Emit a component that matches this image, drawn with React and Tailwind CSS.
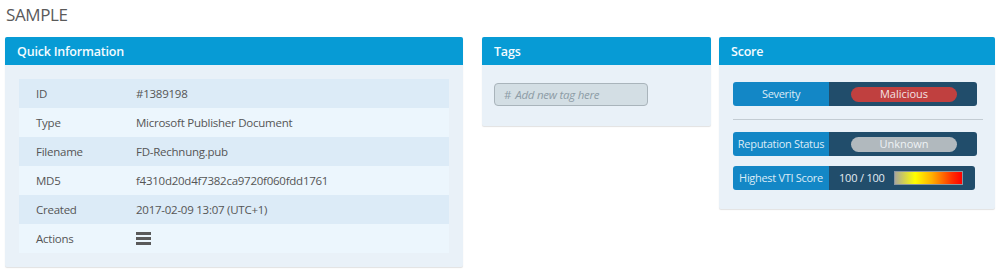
import React from 'react';

const font = { fontFamily: '"Open Sans", "Noto Sans", sans-serif' };

const info = [
  ['ID', '#1389198'],
  ['Type', 'Microsoft Publisher Document'],
  ['Filename', 'FD-Rechnung.pub'],
  ['MD5', 'f4310d20d4f7382ca9720f060fdd1761'],
  ['Created', '2017-02-09 13:07 (UTC+1)'],
  ['Actions', null],
];

const Panel = ({ title, className, children }) => (
  <div className={`bg-[#e9f1f8] rounded-[2px] shadow-[0_1px_1px_rgba(0,0,0,0.12)] ${className}`}>
    <div className="h-[28px] bg-[#079bd5] rounded-t-[2px] px-3 pt-[2px] flex items-center text-[#f4fbff] text-[12.5px] font-semibold tracking-[-0.2px]">
      {title}
    </div>
    {children}
  </div>
);

const Hamburger = () => (
  <div className="flex flex-col gap-[2px] w-[15px]">
    <div className="h-[3px] bg-[#5a5a5a]" />
    <div className="h-[3px] bg-[#5a5a5a]" />
    <div className="h-[3px] bg-[#5a5a5a]" />
  </div>
);

const ScoreRow = ({ label, className = 'w-[244px]', children }) => (
  <div className={`h-[24px] flex rounded-[3px] overflow-hidden ${className}`}>
    <div className="w-[96px] bg-[#1387c6] text-[#dcebf6] text-[11px] flex items-center justify-center tracking-[-0.3px]">
      {label}
    </div>
    <div className="flex-1 bg-[#214d6b] flex items-center">{children}</div>
  </div>
);

export default function App() {
  return (
    <div style={font} className="w-[1004px] h-[275px] bg-white text-[#555] overflow-hidden">
      <div className="pl-[6px] pt-[2px] h-[37px] text-[17px] text-[#5a5a5a] tracking-[-0.4px]">SAMPLE</div>
      <div className="flex items-start pl-[5px]">
        <Panel title="Quick Information" className="w-[458px]">
          <div className="p-[14px]">
            {info.map(([k, v], i) => (
              <div
                key={k}
                className={`h-[29px] flex items-center text-[11.5px] tracking-[-0.25px] ${i % 2 === 0 ? 'bg-[#dcebf7]' : 'bg-[#ecf6fd]'}`}
              >
                <div className="w-[117px] pl-[17px]">{k}</div>
                <div>{v === null ? <Hamburger /> : v}</div>
              </div>
            ))}
          </div>
        </Panel>

        <Panel title="Tags" className="w-[229px] ml-[19px]">
          <div className="pt-[18px] pb-[20px] px-[12px]">
            <div className="w-[154px] h-[23px] rounded-[4px] border border-[#a9b4bb] bg-[#d3dee4] flex items-center pl-[9px] text-[11.5px] italic text-[#8d9ca6] tracking-[-0.25px]">
              <span className="not-italic mr-[4px]">#</span>Add new tag here
            </div>
          </div>
        </Panel>

        <Panel title="Score" className="w-[276px] ml-[8px]">
          <div className="pt-[17px] pb-[19px] pl-[14px] pr-[12px]">
            <ScoreRow label="Severity">
              <div className="ml-[22px] w-[106px] h-[15px] rounded-full bg-[#c0403f] text-[#f3e3e3] text-[11px] flex items-center justify-center">
                Malicious
              </div>
            </ScoreRow>
            <div className="h-px bg-[#c3ccd3] mt-[13px] mb-[12px] w-[250px]" />
            <ScoreRow label="Reputation Status">
              <div className="ml-[22px] w-[106px] h-[15px] rounded-full bg-[#b1b9be] text-[#eef2f4] text-[11px] flex items-center justify-center">
                Unknown
              </div>
            </ScoreRow>
            <div className="h-[10px]" />
            <ScoreRow label="Highest VTI Score" className="w-[242px]">
              <span className="ml-[10px] text-[11px] text-[#e2ecf3] tracking-[-0.2px]">100 / 100</span>
              <div className="ml-[9px] w-[69px] h-[14px] border border-[#8a96a0] bg-[linear-gradient(to_right,#aaa89a,#ffff00_30%,#ffb000_55%,#ff3000_85%,#ff0000)]" />
            </ScoreRow>
          </div>
        </Panel>
      </div>
    </div>
  );
}
